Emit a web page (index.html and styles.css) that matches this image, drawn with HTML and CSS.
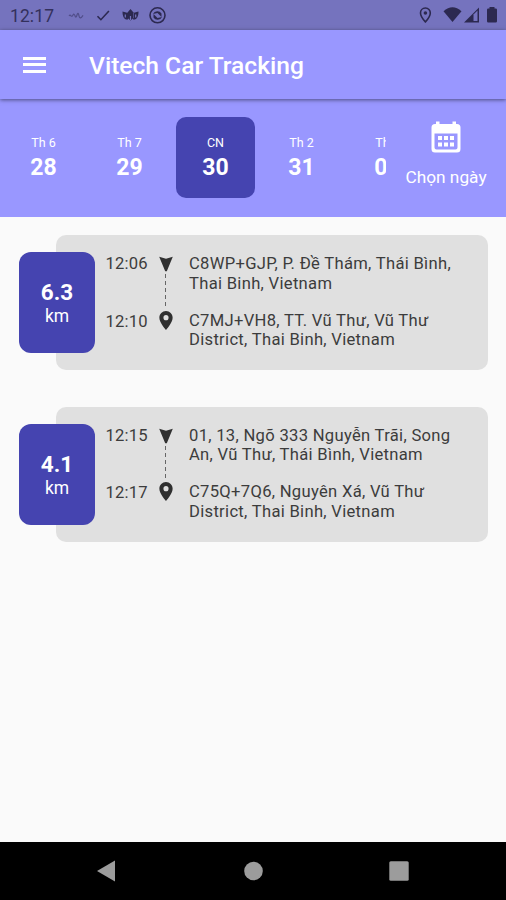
FILE: index.html
```html
<!DOCTYPE html>
<html lang="vi">
<head>
<meta charset="utf-8">
<title>Vitech Car Tracking</title>
<link rel="stylesheet" href="styles.css">
</head>
<body>
<svg class="defs" width="0" height="0" aria-hidden="true">
  <symbol id="start" viewBox="0 0 14 16"><path d="M.2.8 7 2.800 13.800.8 7.800 15.200H6.200Z"/></symbol>
  <symbol id="pin" viewBox="5 2 14 20"><path d="M12 2C8.130 2 5 5.130 5 9c0 5.250 7 13 7 13s7-7.750 7-13c0-3.870-3.130-7-7-7zm0 9.700a2.700 2.700 0 0 1 0-5.400 2.700 2.700 0 0 1 0 5.400z"/></symbol>
</svg>
<div class="screen">
  <div class="status">
    <span class="clock">12:17</span>
    <svg class="notices" width="96" height="18" viewBox="68 6 96 18">
      <path d="M69 15.800q1-1.200 2 0t2-.8 2 .8 2-.8 2 .8 4-.4" class="faint"/>
      <path d="M97.500 16.200l3.400 3.500 8-8.700" class="line"/>
      <path d="M130.500 9l3 3.500v5.500l-3 2.500-3-2.500v-5.500zM122.500 11.500l5.500 1.500v6.500c-4 .5-5.500-3-5.500-8zM138.500 11.500l-5.500 1.500v6.500c4 .5 5.500-3 5.500-8z"/>
      <path d="M125.300 14.500v3M135.700 14.500v3M130.500 16v4" class="cut"/>
      <circle cx="157.500" cy="15.300" r="7.500" class="line"/>
      <path d="M153 14a4.800 4.800 0 0 1 8.500-.5v3.500l-4-4zM162 17a4.800 4.800 0 0 1-8.500.5V14l4 4z"/>
    </svg>
    <svg class="system" width="76" height="18" viewBox="419 6 76 18">
      <path d="M425.400 8c-2.900 0-4.900 2.200-4.900 4.900 0 3.500 4.900 9 4.900 9s4.900-5.500 4.900-9c0-2.700-2-4.900-4.900-4.900z" class="line"/>
      <circle cx="425.400" cy="13" r="1.800"/>
      <path d="M443.500 11.200q9-7.800 18 0L452.500 22z"/>
      <path d="M464 22.500 479 7.500v15z"/>
      <path d="M473.500 14.500v6.500h4V10.500z" class="gap"/>
      <path d="M489.500 7h5v1.500h1.200q1.300 0 1.300 1.300v11.400q0 1.300-1.300 1.300h-7.400q-1.300 0-1.300-1.300V9.800q0-1.300 1.300-1.300h1.200z"/>
    </svg>
  </div>
  <header class="appbar">
    <div class="menu"><i></i><i></i><i></i></div>
    <h1>Vitech Car Tracking</h1>
  </header>
  <section class="dates">
    <div class="days">
      <div class="day"><span>Th 6</span><b>28</b></div>
      <div class="day"><span>Th 7</span><b>29</b></div>
      <div class="day selected"><span>CN</span><b>30</b></div>
      <div class="day"><span>Th 2</span><b>31</b></div>
      <div class="day"><span>Th 3</span><b>01</b></div>
    </div>
    <div class="pick">
      <svg width="30" height="32" viewBox="0 0 30 32">
        <path fill-rule="evenodd" d="M5 .5h3.500V3h13V.5H25V3h1q3.500 0 3.500 3.500V28q0 3.500-3.500 3.500H4Q.5 31.500.5 28V6.500Q.5 3 4 3h1zM3.500 12.500v14q0 2 2 2h19q2 0 2-2v-14z"/>
        <path d="M7 15h4v4H7zm6 0h4v4h-4zm6 0h4v4h-4zM7 21.500h4v4H7zm6 0h4v4h-4zm6 0h4v4h-4z"/>
      </svg>
      <span>Chọn ngày</span>
    </div>
  </section>
  <main class="trips">
    <article class="trip">
      <div class="distance"><b>6.3</b><span>km</span></div>
      <div class="route">
        <div class="stop"><time>12:06</time><svg class="arrow"><use href="#start"/></svg><p>C8WP+GJP, P. Đề Thám, Thái Bình,<br>Thai Binh, Vietnam</p></div>
        <div class="stop"><time>12:10</time><svg class="place"><use href="#pin"/></svg><p>C7MJ+VH8, TT. Vũ Thư, Vũ Thư<br>District, Thai Binh, Vietnam</p></div>
      </div>
    </article>
    <article class="trip">
      <div class="distance"><b>4.1</b><span>km</span></div>
      <div class="route">
        <div class="stop"><time>12:15</time><svg class="arrow"><use href="#start"/></svg><p>01, 13, Ngõ 333 Nguyễn Trãi, Song<br>An, Vũ Thư, Thái Bình, Vietnam</p></div>
        <div class="stop"><time>12:17</time><svg class="place"><use href="#pin"/></svg><p>C75Q+7Q6, Nguyên Xá, Vũ Thư<br>District, Thai Binh, Vietnam</p></div>
      </div>
    </article>
  </main>
  <nav class="navbar">
    <svg width="20" height="22" viewBox="0 0 20 22"><path d="M0 11 18 .5v21z"/></svg>
    <svg width="20" height="20" viewBox="0 0 20 20"><circle cx="10.500" cy="10" r="9.300"/></svg>
    <svg width="20" height="20" viewBox="0 0 20 20"><rect x=".3" y=".3" width="19.400" height="19.400" rx="1.500"/></svg>
  </nav>
</div>
</body>
</html>
```
FILE: styles.css
```css
* { box-sizing: border-box; }
body { margin: 0; font-family: Roboto, "Noto Sans", sans-serif; background: #fafafa; }
.defs { display: block; }
.screen { width: 506px; height: 900px; display: flex; flex-direction: column; overflow: hidden; }
.status { height: 30px; background: #7573be; display: flex; align-items: center; padding: 0 8px 0 10px; color: #33305c; flex: none; }
.clock { font-size: 17.5px; width: 58px; letter-spacing: .1px; padding-top: 2px; }
.status svg { fill: #2c2950; overflow: visible; }
.status .line { fill: none; stroke: #2c2950; stroke-width: 1.6; }
.status .faint { fill: none; stroke: #514e8a; stroke-width: 1.2; }
.status .cut { stroke: #7573be; stroke-width: 1.2; }
.status .gap { fill: #7573be; }
.system { margin-left: auto; margin-right: 3px; }
.appbar { height: 69px; flex: none; background: #9997ff; display: flex; align-items: center; padding-left: 23px; box-shadow: 0 1px 4px rgba(0,0,0,.5); position: relative; z-index: 1; }
.menu { width: 66px; display: grid; gap: 3.5px; }
.menu i { width: 23px; height: 3px; background: #fff; }
h1 { margin: 2px 0 0; font-size: 24.6px; line-height: 30px; font-weight: 500; color: #fff; white-space: nowrap; }
.dates { height: 118px; flex: none; background: #9997ff; color: #fff; display: flex; }
.days { width: 386px; overflow: hidden; display: flex; gap: 7px; padding: 18px 0 0 4px; }
.day { width: 79px; height: 81px; flex: none; display: flex; flex-direction: column; align-items: center; padding-top: 18px; border-radius: 10px; }
.day span { font-size: 12.5px; line-height: 16px; }
.day b { font-size: 23px; line-height: 30px; font-weight: 700; margin-top: 2px; }
.selected { background: #4544b0; }
.pick { flex: 1; display: flex; flex-direction: column; align-items: center; padding-top: 22px; }
.pick svg { fill: #fff; }
.pick span { font-size: 17.3px; line-height: 24px; margin-top: 12px; white-space: nowrap; }
.trips { flex: 1; padding: 18px 18px 0 19px; display: flex; flex-direction: column; gap: 36.5px; }
.trip { height: 135px; display: flex; align-items: center; }
.distance { width: 76px; height: 101px; flex: none; margin-right: -39px; z-index: 1; border-radius: 12px; background: #4544b0; color: #fff; display: flex; flex-direction: column; align-items: center; padding-top: 27px; }
.distance b { font-size: 22.5px; line-height: 26px; }
.distance span { font-size: 17.5px; line-height: 22px; }
.route { flex: 1; height: 135px; border-radius: 10px; background: #e0e0e0; color: #3c3c3c; padding: 19px 0 0 49.5px; display: grid; grid-auto-rows: 39px; gap: 17.5px; align-content: start; }
.stop { display: grid; grid-template-columns: 52px 31.5px 1fr; position: relative; }
.stop time { font-size: 16.6px; line-height: 20px; letter-spacing: .2px; }
.stop:last-child time { padding-top: 1px; }
.stop p { margin: 0; font-size: 16.6px; line-height: 19.5px; letter-spacing: .3px; white-space: nowrap; }
.stop svg { width: 14px; height: 16px; margin-top: 2px; margin-left: 1px; fill: #303030; }
.stop .place { height: 19px; margin-top: 0; }
.stop:first-child::after { content: ""; position: absolute; left: 59.5px; top: 20px; height: 34px; width: 1px; background: repeating-linear-gradient(#666 0 4px, transparent 4px 7px); }
.navbar { height: 58px; flex: none; background: #000; display: flex; justify-content: space-between; align-items: center; padding: 0 97px; }
.navbar svg { fill: #9c9c9c; }
```
